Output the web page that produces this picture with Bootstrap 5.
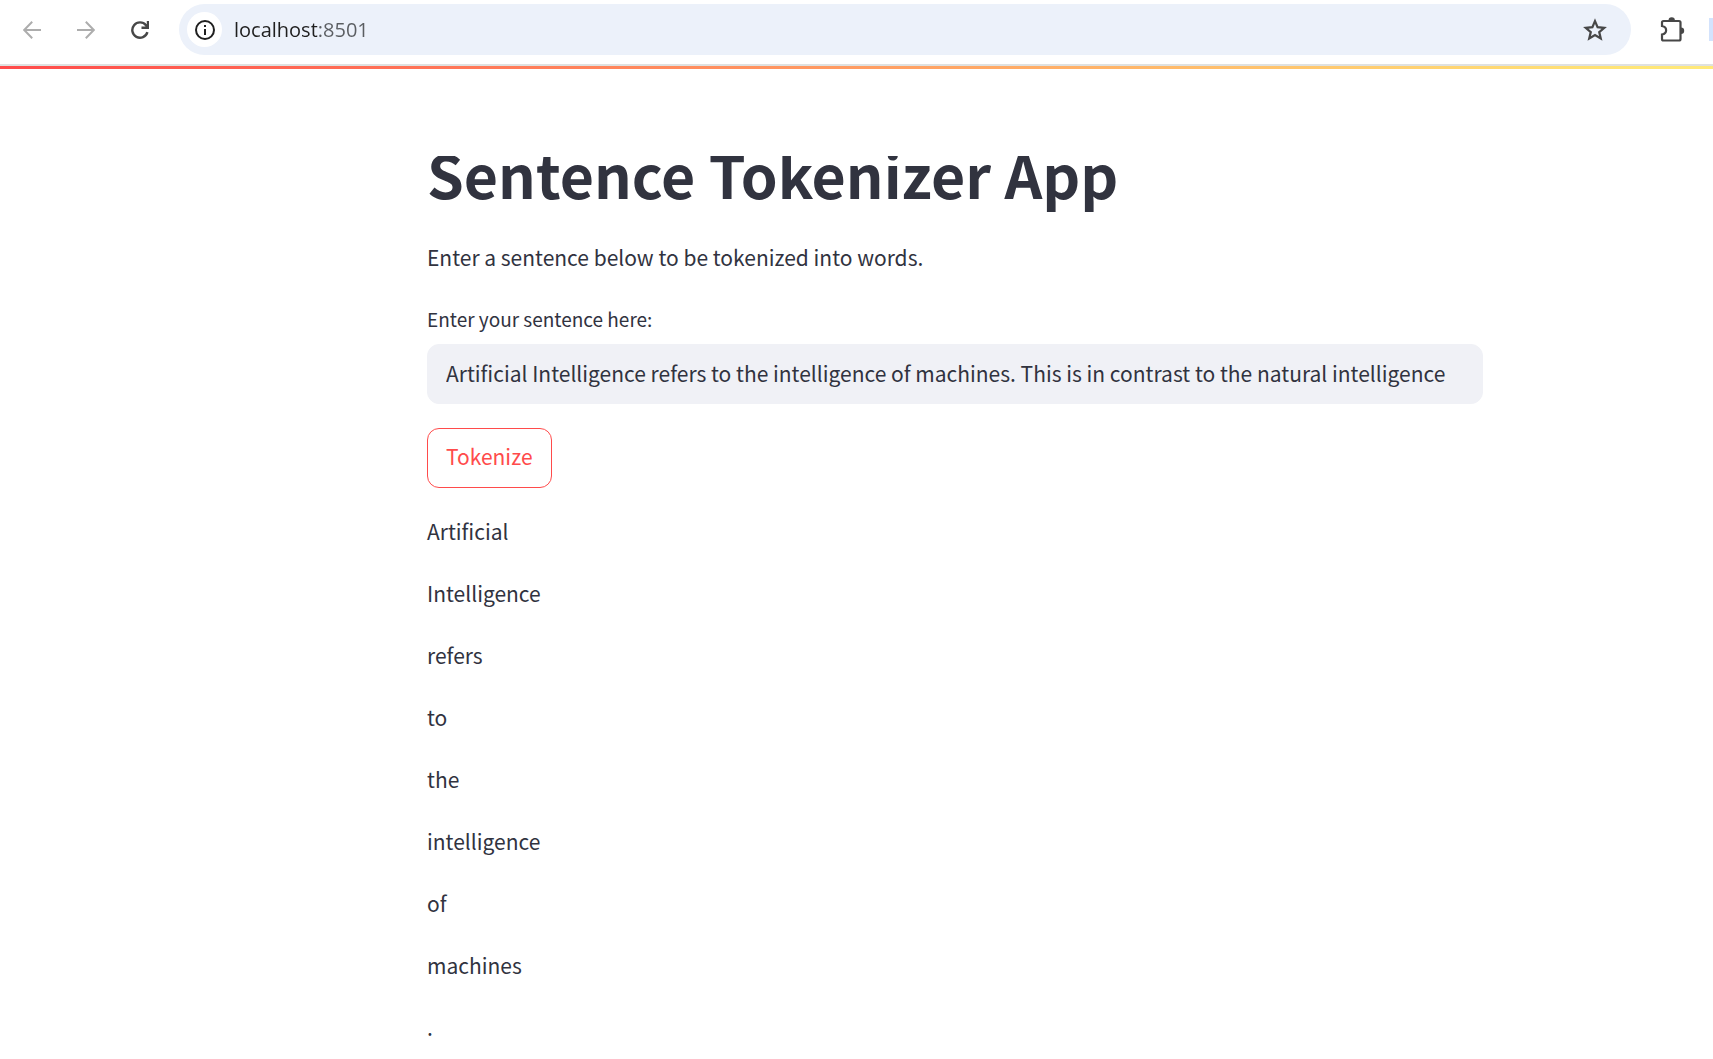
<!DOCTYPE html>
<html lang="en">
<head>
<meta charset="utf-8">
<meta name="viewport" content="width=device-width, initial-scale=1">
<title>Sentence Tokenizer App</title>
<link rel="stylesheet" href="https://cdn.jsdelivr.net/npm/bootstrap@5.3.0/dist/css/bootstrap.min.css">
<style>
  body { font-family: "Noto Sans CJK SC", sans-serif; font-size: 21px; line-height: 38px; color: #31333f; background: #fff; }

  /* Browser toolbar */
  .toolbar { height: 66px; padding: 4px 0 9px 17px; border-bottom: 2px solid #dfe1e0; }
  .tool-btn { width: 30px; height: 30px; color: #474747; }
  .tool-btn svg, .site-info svg, .star-btn svg { display: block; }
  .nav-tools { gap: 24px; margin-right: 24px; }
  .tool-btn:disabled { color: #adadad; opacity: 1; border: 0; }
  .omnibox { height: 51px; padding: 0 24px 0 8px; background: #ecf1fa; }
  .site-info { width: 35px; height: 35px; color: #1f1f1f; }
  .url-field {
    height: 35px; padding: 0 12px; font-family: "Open Sans", "Noto Sans", sans-serif; font-size: 20px; line-height: 35px; color: #1f1f1f;
    background: linear-gradient(90deg, #1f1f1f 95px, #5a5d61 95px);
    -webkit-background-clip: text; background-clip: text; -webkit-text-fill-color: transparent;
    outline: 0;
  }
  .star-btn { color: #474747; }
  .ext-tools { margin-left: 26px; gap: 22px; }
  .profile-edge { width: 4px; height: 23px; background: #d3e3fd; }

  /* App */
  .rainbow { height: 3px; background: linear-gradient(90deg, #ff4b4b, #ffe676 1640px, #ffe97a); }
  .app-main { padding: 87px 230px 0 427px; }
  .app-title { font-size: 59px; line-height: 36px; font-weight: 700; color: #31333f; padding-bottom: 20px; margin-bottom: 26px; overflow: hidden; white-space: nowrap; }
  .intro { margin-bottom: 28px; }
  .field-label { font-size: 19px; line-height: 30px; margin-bottom: 10px; }
  .sentence-field { height: 60px; padding: 0 12px 2px 18px; border: 1px solid #f0f1f6; border-radius: 12px; background: #f0f1f6; font-size: 21px; color: #31333f; }
  .sentence-field:focus { background: #f0f1f6; border-color: #ff4b4b; box-shadow: none; color: #31333f; }
  .btn-tokenize {
    --bs-btn-color: #ff4b4b; --bs-btn-border-color: #ff4b4b; --bs-btn-border-radius: 12px; --bs-btn-font-size: 21px;
    --bs-btn-hover-color: #fff; --bs-btn-hover-bg: #ff4b4b; --bs-btn-hover-border-color: #ff4b4b;
    height: 60px; padding: 0 18px 2px; margin: 24px 0;
  }
  .tokens { gap: 24px; }
</style>
</head>
<body>
<header class="toolbar d-flex align-items-center">
  <nav class="nav-tools d-flex align-items-center" aria-label="Browser">
    <button class="tool-btn btn p-0 d-flex align-items-center justify-content-center" type="button" disabled aria-label="Back">
      <svg width="18" height="18" viewBox="0 0 18 18" fill="none" stroke="currentColor" stroke-width="2"><path d="M18 9H1.5M9.2.8 1.2 9l8 8.2"/></svg>
    </button>
    <button class="tool-btn btn p-0 d-flex align-items-center justify-content-center" type="button" disabled aria-label="Forward">
      <svg width="18" height="18" viewBox="0 0 18 18" fill="none" stroke="currentColor" stroke-width="2"><path d="M0 9h16.500M8.800.8l8 8.200-8 8.200"/></svg>
    </button>
    <button class="tool-btn btn p-0 d-flex align-items-center justify-content-center" type="button" aria-label="Reload">
      <svg width="18" height="18" viewBox="0 0 18 18" fill="none" stroke="currentColor" stroke-width="2.400"><path d="M16.400 11.200A7.700 7.700 0 1 1 15 4.200L16.800 6.200M17 0v6.800h-6.500"/></svg>
    </button>
  </nav>
  <div class="omnibox d-flex align-items-center flex-grow-1 rounded-pill">
    <button class="site-info btn p-0 bg-white rounded-circle d-flex align-items-center justify-content-center flex-shrink-0" type="button" aria-label="View site information">
      <svg width="20" height="20" viewBox="0 0 20 20"><circle cx="10" cy="10" r="9" fill="none" stroke="currentColor" stroke-width="2"/><path d="M9 9h2v6H9zM9 5h2v2H9z" fill="currentColor"/></svg>
    </button>
    <input class="url-field flex-grow-1 border-0" type="text" value="localhost:8501" aria-label="Address" spellcheck="false">
    <button class="star-btn btn p-0 border-0" type="button" aria-label="Bookmark">
      <svg width="24" height="24" viewBox="0 0 25 25" fill="none" stroke="currentColor" stroke-width="2.300"><path d="M12.500 3.200 15.200 9.600l6.900.6-5.200 4.500 1.600 6.700-6-3.600-6 3.600 1.600-6.700-5.200-4.500 6.900-.6z"/></svg>
    </button>
  </div>
  <div class="ext-tools d-flex align-items-center">
    <button class="tool-btn btn p-0 border-0 d-flex align-items-center justify-content-center" type="button" aria-label="Extensions">
      <svg width="26" height="26" viewBox="0 1 26 26"><path d="M4.500 5h15.500q1.500 0 1.500 1.500V23q0 1.500-1.500 1.500H4.500Q3 24.500 3 23v-4.500c5.500-1 5.500-7.500 0-8.500V6.500Q3 5 4.500 5z" fill="none" stroke="currentColor" stroke-width="2.200"/><path d="M9.500 4.500a3.200 3.200 0 0 1 6.400 0zM22 11.600a3.200 3.200 0 0 1 0 6.400z" fill="currentColor"/></svg>
    </button>
    <span class="profile-edge"></span>
  </div>
</header>
<div class="rainbow"></div>

<main class="app-main">
  <h1 class="app-title">Sentence Tokenizer App</h1>
  <p class="intro">Enter a sentence below to be tokenized into words.</p>
  <form onsubmit="return false">
    <label class="field-label d-block" for="sentence">Enter your sentence here:</label>
    <input class="sentence-field form-control" id="sentence" type="text" value="Artificial Intelligence refers to the intelligence of machines. This is in contrast to the natural intelligence">
    <button class="btn btn-tokenize" type="submit">Tokenize</button>
  </form>
  <div class="tokens d-flex flex-column">
    <p class="mb-0">Artificial</p>
    <p class="mb-0">Intelligence</p>
    <p class="mb-0">refers</p>
    <p class="mb-0">to</p>
    <p class="mb-0">the</p>
    <p class="mb-0">intelligence</p>
    <p class="mb-0">of</p>
    <p class="mb-0">machines</p>
    <p class="mb-0">.</p>
  </div>
</main>
<script src="https://cdn.jsdelivr.net/npm/bootstrap@5.3.0/dist/js/bootstrap.bundle.min.js"></script>
</body>
</html>
